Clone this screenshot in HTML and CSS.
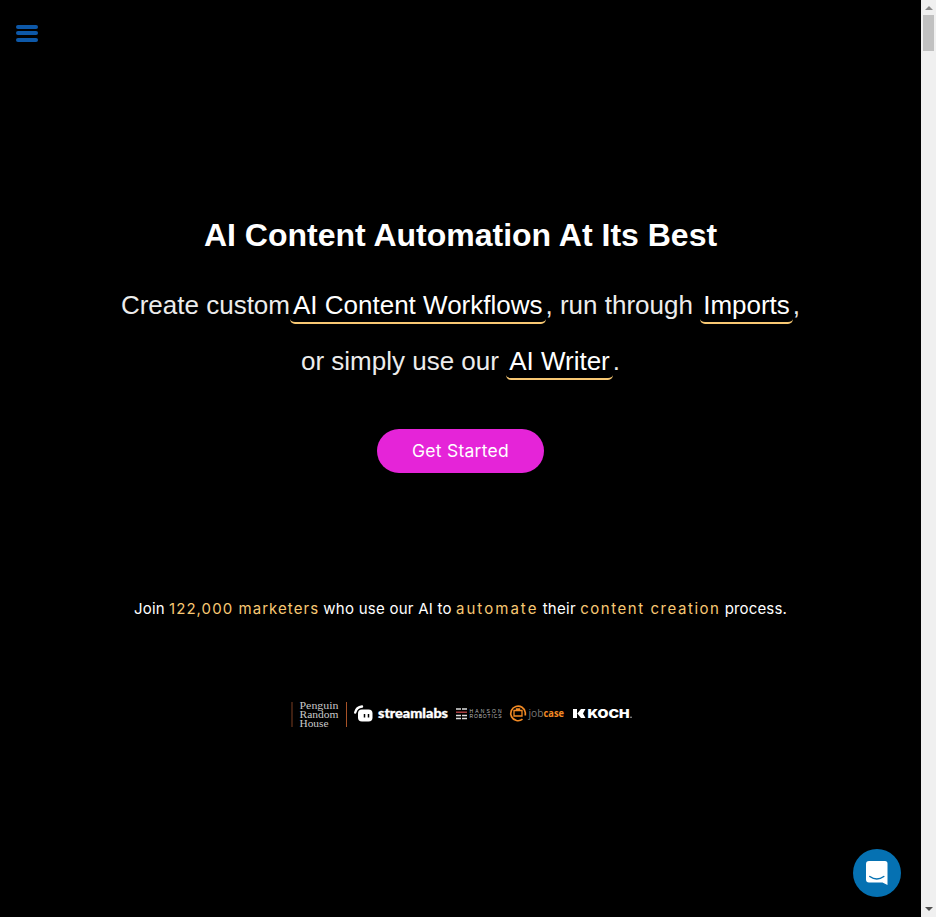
FILE: index.html
```html
<!DOCTYPE html>
<html lang="en">
<head>
<meta charset="utf-8">
<title>AI Content Automation</title>
<link rel="stylesheet" href="styles.css">
</head>
<body>
<div class="page">
  <header class="topbar">
    <button class="menu" aria-label="Menu"><span></span><span></span><span></span></button>
  </header>
  <main class="hero">
    <h1 class="title">AI Content Automation At Its Best</h1>
    <p class="lead">Create custom<a class="link">AI Content Workflows</a>, run through <a class="link">Imports</a>,<br>or simply use our <a class="link">AI Writer</a>.</p>
    <button class="cta"><span>Get Started</span></button>
    <p class="join"><span class="w1">Join</span><em class="w2">122,000 marketers</em><span class="w3">who use our AI to</span><em class="w4">automate</em><span class="w5">their</span><em class="w6">content creation</em><span class="w7">process.</span></p>
    <svg class="logos" width="351" height="40" viewBox="285 695 351 40">
      <path d="M292 702v25" stroke="#7d3f22" stroke-width="1"/>
      <path d="M346.500 702v25" stroke="#a75227" stroke-width="1"/>
      <g class="penguin">
        <text x="299.500" y="709" textLength="39" lengthAdjust="spacingAndGlyphs">Penguin</text>
        <text x="299.500" y="718" textLength="39" lengthAdjust="spacingAndGlyphs">Random</text>
        <text x="299.500" y="727" textLength="29" lengthAdjust="spacingAndGlyphs">House</text>
      </g>
      <path d="M355.200 712.500Q356.500 707 362 706.500" fill="none" stroke="#fff" stroke-width="2.400" stroke-linecap="round"/>
      <path d="M362 709.500h6.500q4 0 4 4v4q0 4-4 4h-6.500q-4 0-4-4v-4q0-4 4-4z" fill="#fff"/>
      <path d="M364.500 714v3.500M368.500 714v3.500" stroke="#000" stroke-width="1.500"/>
      <text class="stream" x="378" y="718" textLength="70" lengthAdjust="spacingAndGlyphs">streamlabs</text>
      <path d="M456 709h5M456 715.500h5M456 718.500h5M462 709h5M462 715.500h5M462 718.500h5" stroke="#ddd" stroke-width="1.500"/>
      <path d="M456 712.200h11" stroke="#b64548" stroke-width="1.400"/>
      <g class="hanson">
        <text x="469.500" y="712.800" textLength="32">HANSON</text>
        <text x="469.500" y="718.400" textLength="32">ROBOTICS</text>
      </g>
      <path d="M522.500 719.200A7.300 7.300 0 1 1 525.300 712.500V715.500" fill="none" stroke="#f28a24" stroke-width="1.700"/>
      <path d="M514 710.500h8v5.500h-8zM516.500 710.500v-1.500h3v1.500" fill="none" stroke="#f28a24" stroke-width="1.300"/>
      <text class="job" x="528.500" y="717" textLength="15" lengthAdjust="spacingAndGlyphs">job</text>
      <text class="case" x="543.500" y="717" textLength="20.500" lengthAdjust="spacingAndGlyphs">case</text>
      <path d="M573 709h4v9h-4zM577.300 713.500l3.700-4.500h4.500l-2.500 4.500 2.500 4.500h-4.500z" fill="#fff"/>
      <text class="koch" x="587.500" y="717.500" textLength="42" lengthAdjust="spacingAndGlyphs">KOCH</text>
      <circle cx="631" cy="717.300" r=".8" fill="#bbb"/>
    </svg>
  </main>
</div>
<aside class="scrollbar"><i class="up"></i><i class="thumb"></i><i class="down"></i></aside>
<button class="chat" aria-label="Chat">
  <svg width="24" height="26" viewBox="0 0 24 26">
    <path d="M4 1h16q2.500 0 2.500 2.500V25l-5-2.500H4Q1 22.500 1 19.500V4Q1 1 4 1z" fill="#fff"/>
    <path d="M4.800 16.500q7 5 14 0" fill="none" stroke="#0571b2" stroke-width="1.500" stroke-linecap="round"/>
  </svg>
</button>
</body>
</html>
```
FILE: styles.css
```css
* { box-sizing: border-box; }
body {
  margin: 0;
  height: 917px;
  display: flex;
  overflow: hidden;
  background: #000;
  color: #fff;
  font-family: "Liberation Sans", Arial, sans-serif;
}
button { border: 0; padding: 0; }
.page { width: 921px; }
.topbar { height: 67px; padding: 24.500px 0 0 16.400px; }
.menu { display: flex; flex-direction: column; gap: 2.500px; width: 22px; background: none; }
.menu span { width: 22px; height: 4.200px; border-radius: 2px; background: #0d58a8; }
.hero { display: flex; flex-direction: column; align-items: center; }
.title { margin: 148px 0 0; font-size: 32px; line-height: 40px; white-space: nowrap; }
.lead {
  margin: 22px 0 0;
  font-size: 26px;
  line-height: 56px;
  text-align: center;
  white-space: nowrap;
  color: #ececec;
}
.link {
  color: #fff;
  padding: 0 3px 2px;
  border-bottom: 2px solid #f8c873;
  border-radius: 5px;
}
.cta {
  width: 167px;
  height: 44px;
  margin-top: 40px;
  border-radius: 22px;
  background: #e524d8;
  color: #fff;
  font: 17.500px/44px Inter, sans-serif;
  letter-spacing: .25px;
}
.join {
  display: flex;
  width: 653px;
  justify-content: space-between;
  margin: 124px 0 0;
  font: 15px/24px Inter, sans-serif;
  white-space: nowrap;
}
.join em { font-style: normal; color: #f8c873; }
.w1 { letter-spacing: .2px; }
.w2 { letter-spacing: 1.060px; }
.w3 { letter-spacing: .25px; }
.w4 { letter-spacing: 2.050px; }
.w5 { letter-spacing: .3px; }
.w6 { letter-spacing: 1.550px; }
.w7 { letter-spacing: .15px; }
.logos { display: block; margin-top: 74px; }
.penguin { fill: #c9c9c9; font: 10px/1 "Liberation Serif", serif; }
.stream { fill: #fff; font: 900 12.500px Lato, sans-serif; stroke: #fff; stroke-width: .3px; }
.hanson { fill: #bbb; font: 5px "Liberation Sans", sans-serif; }
.job { fill: #777; font: 11px "Open Sans", sans-serif; }
.case { fill: #f28a24; font: 700 11px "Open Sans", sans-serif; }
.koch { fill: #fff; font: 900 11.500px Inter, sans-serif; }
.scrollbar {
  width: 15px;
  height: 917px;
  padding: 6px 0;
  display: flex;
  flex-direction: column;
  align-items: center;
  background: #f0f0f0;
}
.up, .down { border: 4px solid transparent; border-top: 0; border-bottom: 4px solid #8b8b8b; }
.thumb { width: 11px; height: 36px; margin-top: 5px; background: #c1c1c1; }
.down { margin-top: auto; border-bottom: 0; border-top: 4px solid #505050; }
.chat {
  position: absolute;
  left: 853px;
  top: 849px;
  width: 48px;
  height: 48px;
  display: flex;
  align-items: center;
  justify-content: center;
  border-radius: 50%;
  background: #0571b2;
}
```
